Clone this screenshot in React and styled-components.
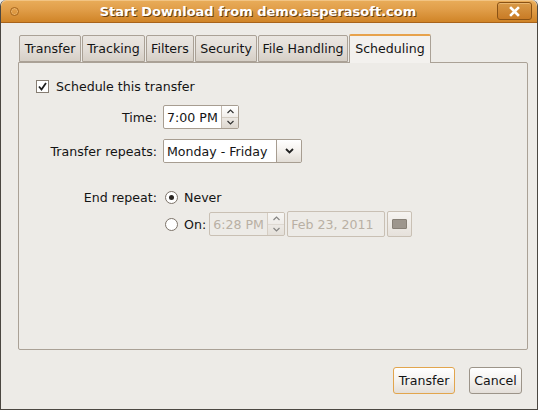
import React from 'react';
import styled, { createGlobalStyle } from 'styled-components';

const GlobalStyle = createGlobalStyle`
  html, body {
    margin: 0;
    padding: 0;
    background: #edebe7;
  }
  * {
    box-sizing: border-box;
  }
`;

const Window = styled.div`
  width: 538px;
  height: 410px;
  display: flex;
  flex-direction: column;
  background: #edebe7;
  border: 1px solid #4b4741;
  border-top: none;
  border-radius: 6px 6px 0 0;
  font-family: 'DejaVu Sans', 'Liberation Sans', sans-serif;
  font-size: 12.6px;
  color: #141414;
  overflow: hidden;
`;

const TitleBar = styled.div`
  height: 23px;
  flex: none;
  display: flex;
  align-items: center;
  padding: 0 5px 0 9px;
  background: linear-gradient(#e9ad5a 0%, #e09d48 45%, #d08427 100%);
  border-bottom: 1px solid #a8631a;
  border-radius: 6px 6px 0 0;
  box-shadow: inset 0 1px 0 #f2c483;
`;

const MenuDot = styled.span`
  width: 9px;
  height: 9px;
  border-radius: 50%;
  border: 1px solid #a5651d;
  box-shadow: inset 0 0 0 1px #eab46a;
`;

const Title = styled.div`
  flex: 1;
  text-align: center;
  color: #ffffff;
  font-weight: bold;
  font-size: 13px;
  text-shadow: 1px 1px 0 #6a3f10;
`;

const CloseButton = styled.span`
  width: 35px;
  height: 18px;
  display: flex;
  align-items: center;
  justify-content: center;
  border: 1px solid #8a5214;
  border-radius: 3px;
  background: linear-gradient(#d99a48, #c97b25);
  box-shadow: inset 0 1px 0 #e9b670;
`;

const Body = styled.div`
  flex: 1;
  display: flex;
  flex-direction: column;
  padding: 11px 9px 15px 17px;
`;

const TabRow = styled.div`
  display: flex;
  align-items: flex-end;
  height: 28px;
  padding-left: 1px;
`;

const Tab = styled.div`
  height: ${(p) => (p.$active ? '29px' : '27px')};
  margin-bottom: ${(p) => (p.$active ? '-1px' : '0')};
  width: ${(p) => p.$w}px;
  margin-right: 1px;
  display: flex;
  align-items: center;
  justify-content: center;
  padding-bottom: ${(p) => (p.$active ? '3px' : '0')};
  border: 1px solid #aaa196;
  border-bottom: ${(p) => (p.$active ? 'none' : '1px solid #aaa196')};
  border-top: ${(p) => (p.$active ? '2px solid #e7a24c' : '1px solid #aaa196')};
  border-radius: 2px 2px 0 0;
  background: ${(p) =>
    p.$active ? '#f3f1ee' : 'linear-gradient(#eae6e1 0%, #e3ded8 50%, #d6cfc6 100%)'};
  position: relative;
  z-index: ${(p) => (p.$active ? 1 : 0)};
  white-space: nowrap;
`;

const Panel = styled.div`
  flex: 1;
  border: 1px solid #aaa196;
  border-radius: 0 2px 2px 2px;
  padding: 13px 16px 0 17px;
  display: flex;
  flex-direction: column;
`;

const CheckRow = styled.label`
  display: flex;
  align-items: center;
  gap: 7px;
  height: 18px;
  margin-top: 1px;
`;

const CheckBox = styled.span`
  width: 13px;
  height: 13px;
  border: 1px solid #867d72;
  background: #ffffff;
  display: flex;
  align-items: center;
  justify-content: center;
`;

const Form = styled.div`
  display: grid;
  grid-template-columns: 121px auto;
  column-gap: 6px;
  margin-top: 10px;
  align-items: center;
`;

const Label = styled.span`
  text-align: right;
  white-space: nowrap;
  margin-top: ${(p) => p.$top || 0}px;
`;

const Cell = styled.div`
  display: flex;
  align-items: center;
  margin-top: ${(p) => p.$top || 0}px;
  height: ${(p) => p.$h || 24}px;
`;

const Spin = styled.div`
  display: flex;
  height: 24px;
  border: 1px solid ${(p) => (p.$disabled ? '#c9c0b4' : '#a79d91')};
  border-radius: 2px;
  background: ${(p) => (p.$disabled ? '#edebe7' : '#ffffff')};
  color: ${(p) => (p.$disabled ? '#b9b0a4' : '#141414')};
`;

const SpinText = styled.span`
  width: ${(p) => p.$w}px;
  display: flex;
  align-items: center;
  padding-left: 3px;
  white-space: nowrap;
`;

const SpinButtons = styled.div`
  width: 17px;
  display: flex;
  flex-direction: column;
  border-left: 1px solid ${(p) => (p.$disabled ? '#d6cec3' : '#c3bab0')};
`;

const SpinHalf = styled.span`
  flex: 1;
  display: flex;
  align-items: center;
  justify-content: center;
  background: ${(p) =>
    p.$down ? 'linear-gradient(#ece8e3, #ddd7cf)' : 'linear-gradient(#ffffff, #f1eeea)'};
  border-top: ${(p) => (p.$down ? '1px solid #d3ccc2' : 'none')};
  opacity: ${(p) => (p.$disabled ? 0.55 : 1)};
`;

const Combo = styled.div`
  display: flex;
  height: 24px;
  border: 1px solid #a79d91;
  border-radius: 2px;
  overflow: hidden;
`;

const ComboText = styled.span`
  width: 113px;
  display: flex;
  align-items: center;
  padding-left: 3px;
  background: #ffffff;
  border-right: 1px solid #a79d91;
  white-space: nowrap;
`;

const ComboButton = styled.span`
  width: 24px;
  display: flex;
  align-items: center;
  justify-content: center;
  background: linear-gradient(#ffffff 0%, #f4f1ed 50%, #e2ddd6 100%);
`;

const Radio = styled.span`
  width: 13px;
  height: 13px;
  border-radius: 50%;
  border: 1px solid #7c7369;
  background: #ffffff;
  display: flex;
  align-items: center;
  justify-content: center;
  margin-left: 2px;
  margin-right: 6px;

  &::after {
    content: '';
    display: ${(p) => (p.$on ? 'block' : 'none')};
    width: 5px;
    height: 5px;
    border-radius: 50%;
    background: #2a2622;
  }
`;

const OnLabel = styled.span`
  margin-right: 3px;
`;

const DateEntry = styled.span`
  width: 98px;
  height: 26px;
  display: flex;
  align-items: center;
  padding-left: 3px;
  border: 1px solid #c9c0b4;
  border-radius: 2px;
  color: #b9b0a4;
  margin-left: 2px;
  white-space: nowrap;
`;

const CalendarButton = styled.span`
  width: 25px;
  height: 26px;
  margin-left: 2px;
  display: flex;
  align-items: center;
  justify-content: center;
  border: 1px solid #c9c0b4;
  border-radius: 2px;
  background: linear-gradient(#f6f4f1, #e6e1db);
`;

const CalendarIcon = styled.span`
  width: 15px;
  height: 10px;
  background: #9d968d;
  border: 1px solid #878076;
  border-radius: 1px;
`;

const Footer = styled.div`
  display: flex;
  justify-content: flex-end;
  gap: 14px;
  padding-top: 17px;
  padding-right: 6px;
`;

const Button = styled.button`
  height: 27px;
  padding: 0;
  width: ${(p) => p.$w}px;
  font-family: inherit;
  font-size: 12.6px;
  color: #141414;
  border: 1px solid ${(p) => (p.$default ? '#e2a54d' : '#9c9489')};
  border-radius: 3px;
  background: linear-gradient(#ffffff 0%, #f4f2ef 50%, #e4dfd9 100%);
`;

const Chevron = ({ up, color = '#333' }) => (
  <svg width="7" height="5" viewBox="0 0 7 5">
    <path
      d={up ? 'M0.5 4L3.5 1L6.5 4' : 'M0.5 1L3.5 4L6.5 1'}
      fill="none"
      stroke={color}
      strokeWidth="1.2"
    />
  </svg>
);

const TimeSpin = ({ value, disabled }) => (
  <Spin $disabled={disabled}>
    <SpinText $w={57}>{value}</SpinText>
    <SpinButtons $disabled={disabled}>
      <SpinHalf $disabled={disabled}>
        <Chevron up />
      </SpinHalf>
      <SpinHalf $down $disabled={disabled}>
        <Chevron />
      </SpinHalf>
    </SpinButtons>
  </Spin>
);

const tabs = [
  { name: 'Transfer', w: 62 },
  { name: 'Tracking', w: 63 },
  { name: 'Filters', w: 48 },
  { name: 'Security', w: 62 },
  { name: 'File Handling', w: 90 },
  { name: 'Scheduling', w: 82 },
];

export default function App() {
  return (
    <>
      <GlobalStyle />
      <Window>
        <TitleBar>
          <MenuDot />
          <Title>Start Download from demo.asperasoft.com</Title>
          <CloseButton>
            <svg width="11" height="11" viewBox="0 0 11 11">
              <path d="M2 2L9 9M9 2L2 9" stroke="#fff" strokeWidth="2.6" strokeLinecap="square" />
            </svg>
          </CloseButton>
        </TitleBar>
        <Body>
          <TabRow>
            {tabs.map((t) => (
              <Tab key={t.name} $w={t.w} $active={t.name === 'Scheduling'}>
                {t.name}
              </Tab>
            ))}
          </TabRow>
          <Panel>
            <CheckRow>
              <CheckBox>
                <svg width="9" height="9" viewBox="0 0 9 9">
                  <path d="M1 4.5L3.5 7.5L8 1" fill="none" stroke="#1e1e1e" strokeWidth="1.8" />
                </svg>
              </CheckBox>
              Schedule this transfer
            </CheckRow>
            <Form>
              <Label>Time:</Label>
              <Cell>
                <TimeSpin value="7:00 PM" />
              </Cell>
              <Label $top={10}>Transfer repeats:</Label>
              <Cell $top={10}>
                <Combo>
                  <ComboText>Monday - Friday</ComboText>
                  <ComboButton>
                    <svg width="9" height="6" viewBox="0 0 9 6">
                      <path d="M1 1L4.5 4.5L8 1" fill="none" stroke="#222" strokeWidth="1.8" />
                    </svg>
                  </ComboButton>
                </Combo>
              </Cell>
              <Label $top={22}>End repeat:</Label>
              <Cell $top={22}>
                <Radio $on />
                Never
              </Cell>
              <span />
              <Cell $top={2} $h={26}>
                <Radio />
                <OnLabel>On:</OnLabel>
                <TimeSpin value="6:28 PM" disabled />
                <DateEntry>Feb 23, 2011</DateEntry>
                <CalendarButton>
                  <CalendarIcon />
                </CalendarButton>
              </Cell>
            </Form>
          </Panel>
          <Footer>
            <Button $default $w={62}>Transfer</Button>
            <Button $w={53}>Cancel</Button>
          </Footer>
        </Body>
      </Window>
    </>
  );
}
